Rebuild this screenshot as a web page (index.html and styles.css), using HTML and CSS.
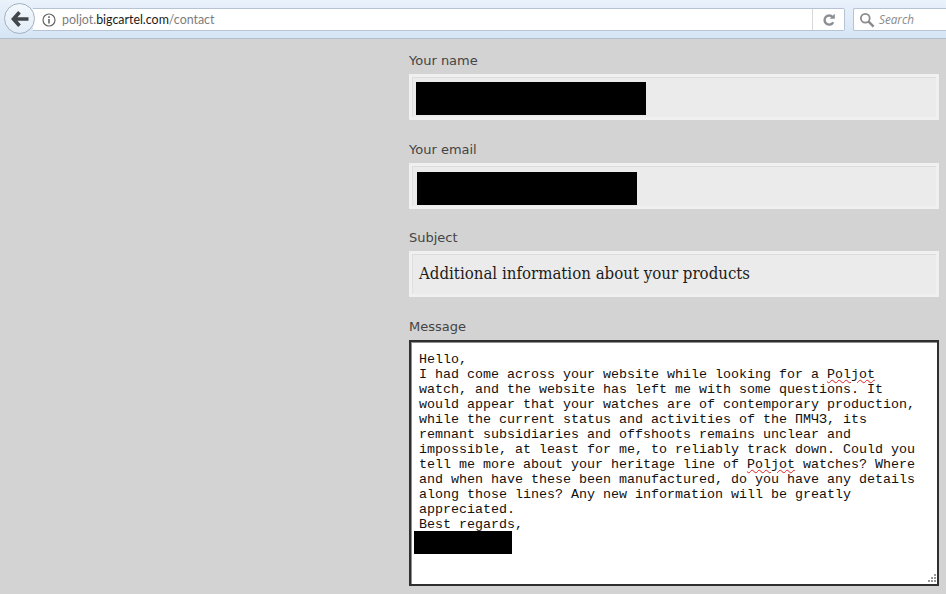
FILE: index.html
```html
<!DOCTYPE html>
<html lang="en">
<head>
<meta charset="utf-8">
<title>Contact</title>
<link rel="stylesheet" href="styles.css">
</head>
<body>
<header class="toolbar">
  <button class="back" aria-label="Back">
    <svg width="18" height="16" viewBox="0 0 18 16"><path d="M8.5 1.2 2.4 8l6.1 6.8M3 8H17.5" fill="none" stroke="#43474c" stroke-width="3.6"/></svg>
  </button>
  <div class="urlbar">
    <svg class="info" width="14" height="14" viewBox="0 0 14 14"><circle cx="7" cy="7" r="6" fill="none" stroke="#666" stroke-width="1.2"/><path d="M7 6v4.5M7 3.3v1.6" stroke="#666" stroke-width="1.6"/></svg>
    <span class="url">poljot.<b>bigcartel.com</b>/contact</span>
    <span class="reload">
      <svg width="14" height="14" viewBox="0 0 14 14"><path d="M11.2 9.2A4.6 4.6 0 1 1 10.6 4" fill="none" stroke="#8a8f95" stroke-width="2.4"/><path d="M7.6 5.8h5.2V.8z" fill="#8a8f95"/></svg>
    </span>
  </div>
  <div class="searchbar">
    <svg width="16" height="16" viewBox="0 0 16 16"><circle cx="6.3" cy="6.3" r="4.4" fill="none" stroke="#8a8a8a" stroke-width="1.8"/><path d="M9.6 9.6 14.6 14.6" stroke="#8a8a8a" stroke-width="2.4"/></svg>
    <span class="search-text">Search</span>
  </div>
</header>
<main class="page">
  <form class="contact">
    <div class="field field-wide">
      <label class="label">Your name</label>
      <div class="input"><div class="redact redact-name"></div></div>
    </div>
    <div class="field">
      <label class="label">Your email</label>
      <div class="input"><div class="redact redact-email"></div></div>
    </div>
    <div class="field field-wide">
      <label class="label">Subject</label>
      <div class="input subject">Additional information about your products</div>
    </div>
    <div class="field">
      <label class="label">Message</label>
      <div class="message">
        <div>Hello,</div>
        <div>I had come across your website while looking for a <span class="typo">Poljot</span></div>
        <div>watch, and the website has left me with some questions. It</div>
        <div>would appear that your watches are of contemporary production,</div>
        <div>while the current status and activities of the ПМЧЗ, its</div>
        <div>remnant subsidiaries and offshoots remains unclear and</div>
        <div>impossible, at least for me, to reliably track down. Could you</div>
        <div>tell me more about your heritage line of <span class="typo">Poljot</span> watches? Where</div>
        <div>and when have these been manufactured, do you have any details</div>
        <div>along those lines? Any new information will be greatly</div>
        <div>appreciated.</div>
        <div>Best regards,</div>
        <div class="redact redact-sign"></div>
        <svg class="grip" width="11" height="11" viewBox="0 0 11 11"><path d="M8 1h2v2H8zM8 4h2v2H8zM8 7h2v2H8zM5 4h2v2H5zM5 7h2v2H5zM2 7h2v2H2z" fill="#999"/></svg>
      </div>
    </div>
  </form>
</main>
</body>
</html>
```
FILE: styles.css
```css
html, body {
  margin: 0;
  height: 100%;
  overflow: hidden;
}
body {
  background: #d3d3d3;
  width: 946px;
  height: 594px;
}
.toolbar {
  height: 39px;
  box-sizing: border-box;
  border-bottom: 1px solid #b4bfcc;
  background: linear-gradient(#eaf2fb, #d6e5f5);
  display: flex;
  align-items: flex-start;
  padding: 3px 0 0 4px;
}
.back {
  width: 31px;
  height: 31px;
  flex: none;
  box-sizing: border-box;
  border: 1px solid #a3b1c2;
  border-radius: 50%;
  background: linear-gradient(#f4f8fd, #e2ecf7);
  padding: 0;
  display: flex;
  align-items: center;
  justify-content: center;
  position: relative;
  z-index: 1;
}
.urlbar {
  margin: 5px 0 0 -2px;
  width: 812px;
  height: 23px;
  box-sizing: border-box;
  background: #fff;
  border: 1px solid #b6c3d3;
  border-left: 0;
  border-radius: 0 2px 2px 0;
  display: flex;
  align-items: center;
  padding-left: 9px;
}
.info { flex: none; }
.url {
  margin: 0 0 1px 6px;
  font: 12.4px Lato, "Open Sans", sans-serif;
  color: #7d7d7d;
  flex: 1;
}
.url b {
  font-weight: 400;
  color: #1a1a1a;
}
.reload {
  flex: none;
  width: 31px;
  height: 21px;
  border-left: 1px solid #d8d8d8;
  display: flex;
  align-items: center;
  justify-content: center;
}
.searchbar {
  margin: 5px 0 0 8px;
  flex: 1;
  height: 23px;
  box-sizing: border-box;
  background: #fff;
  border: 1px solid #b6c3d3;
  border-right: 0;
  border-radius: 2px 0 0 2px;
  display: flex;
  align-items: center;
  padding-left: 5px;
  gap: 4px;
  font: italic 11.7px "Open Sans", sans-serif;
  color: #8a8a8a;
}
.search-text {
  margin-bottom: 2px;
}
.page {
  padding-left: 409px;
}
.contact {
  width: 530px;
  padding-top: 13px;
  display: flex;
  flex-direction: column;
  gap: 20px;
}
.field {
  display: flex;
  flex-direction: column;
  gap: 5px;
}
.field-wide {
  margin-bottom: 1px;
}
.label {
  font: 13px/17px "DejaVu Sans", Verdana, sans-serif;
  color: #444;
}
.input {
  height: 46px;
  box-sizing: border-box;
  background: #ebebeb;
  border: 3px solid #f0f0f0;
  box-shadow: inset 0 1px 0 #dcdcdc, inset 1px 0 0 #dfdfdf;
  display: flex;
  align-items: flex-start;
}
.subject {
  align-items: center;
  padding: 0 0 2px 7px;
  font: 16.7px "DejaVu Serif Condensed", "DejaVu Serif", serif;
  color: #1c1c1c;
}
.redact {
  background: #000;
}
.redact-name {
  width: 230px;
  height: 33px;
  margin: 5px 0 0 4px;
}
.redact-email {
  width: 220px;
  height: 33px;
  margin: 6px 0 0 5px;
}
.message {
  position: relative;
  height: 246px;
  box-sizing: border-box;
  background: #fff;
  border: 2px solid #2f2f2f;
  box-shadow: inset 1px 1px 0 #8f8f8f;
  padding: 10px 8px 0;
  font: 13.33px/15px "Liberation Mono", "Courier New", monospace;
  color: #111;
  white-space: nowrap;
}
.typo {
  text-decoration: underline wavy #d22;
  text-decoration-thickness: 1px;
  text-underline-offset: 1px;
}
.redact-sign {
  width: 98px;
  height: 23px;
  margin: -1px 0 0 -5px;
}
.grip {
  position: absolute;
  right: 0;
  bottom: 0;
}
```
